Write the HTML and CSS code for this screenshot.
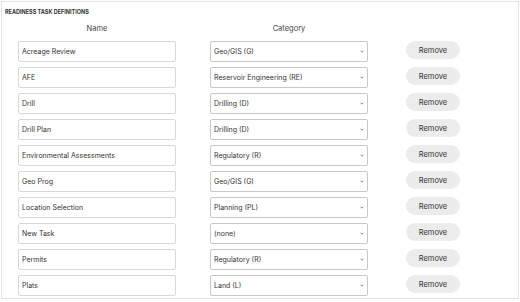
FILE: index.html
```html
<!DOCTYPE html>
<html lang="en">
<head>
  <meta charset="UTF-8" />
  <title>Readiness Task Definitions</title>
  <link rel="stylesheet" href="styles.css">
</head>
<body>
  <div class="panel">
    <h4 class="panel-title">Readiness Task Definitions</h4>
    <div class="task-grid">
      <div class="col-head">Name</div>
      <div class="col-head">Category</div>
      <div></div>

      <input type="text" value="Acreage Review" />
      <div class="select-wrap"><select><option>Geo/GIS (G)</option></select><svg class="chev" viewBox="0 0 4 3"><path d="M0.5 0.7 L2 2.2 L3.5 0.7" /></svg></div>
      <button>Remove</button>

      <input type="text" value="AFE" />
      <div class="select-wrap"><select><option>Reservoir Engineering (RE)</option></select><svg class="chev" viewBox="0 0 4 3"><path d="M0.5 0.7 L2 2.2 L3.5 0.7" /></svg></div>
      <button>Remove</button>

      <input type="text" value="Drill" />
      <div class="select-wrap"><select><option>Drilling (D)</option></select><svg class="chev" viewBox="0 0 4 3"><path d="M0.5 0.7 L2 2.2 L3.5 0.7" /></svg></div>
      <button>Remove</button>

      <input type="text" value="Drill Plan" />
      <div class="select-wrap"><select><option>Drilling (D)</option></select><svg class="chev" viewBox="0 0 4 3"><path d="M0.5 0.7 L2 2.2 L3.5 0.7" /></svg></div>
      <button>Remove</button>

      <input type="text" value="Environmental Assessments" />
      <div class="select-wrap"><select><option>Regulatory (R)</option></select><svg class="chev" viewBox="0 0 4 3"><path d="M0.5 0.7 L2 2.2 L3.5 0.7" /></svg></div>
      <button>Remove</button>

      <input type="text" value="Geo Prog" />
      <div class="select-wrap"><select><option>Geo/GIS (G)</option></select><svg class="chev" viewBox="0 0 4 3"><path d="M0.5 0.7 L2 2.2 L3.5 0.7" /></svg></div>
      <button>Remove</button>

      <input type="text" value="Location Selection" />
      <div class="select-wrap"><select><option>Planning (PL)</option></select><svg class="chev" viewBox="0 0 4 3"><path d="M0.5 0.7 L2 2.2 L3.5 0.7" /></svg></div>
      <button>Remove</button>

      <input type="text" value="New Task" />
      <div class="select-wrap"><select><option>(none)</option></select><svg class="chev" viewBox="0 0 4 3"><path d="M0.5 0.7 L2 2.2 L3.5 0.7" /></svg></div>
      <button>Remove</button>

      <input type="text" value="Permits" />
      <div class="select-wrap"><select><option>Regulatory (R)</option></select><svg class="chev" viewBox="0 0 4 3"><path d="M0.5 0.7 L2 2.2 L3.5 0.7" /></svg></div>
      <button>Remove</button>

      <input type="text" value="Plats" />
      <div class="select-wrap"><select><option>Land (L)</option></select><svg class="chev" viewBox="0 0 4 3"><path d="M0.5 0.7 L2 2.2 L3.5 0.7" /></svg></div>
      <button>Remove</button>
    </div>
  </div>
</body>
</html>
```

FILE: styles.css
```css
body {
  margin: 0;
  padding: 1px;
  background-color: #fff;
  font-family: Inter, "Noto Sans", sans-serif;
  color: #333;
}

.panel {
  border: 1px solid #e2e2e2;
  height: 298px;
  box-sizing: border-box;
  padding: 0 0 0 1px;
}

.panel-title {
  margin: 0;
  padding: 7px 0 0 2px;
  height: 11px;
  font-size: 5.5px;
  font-weight: 700;
  text-transform: uppercase;
  color: #333;
}

.task-grid {
  display: grid;
  grid-template-columns: 188px 196px 92px;
  grid-template-rows: 16px;
  grid-auto-rows: 21px;
  row-gap: 5px;
  justify-items: center;
  align-items: center;
}

.col-head {
  font-size: 7.5px;
  color: #444;
}

input[type="text"], select {
  width: 158px;
  height: 21px;
  box-sizing: border-box;
  border: 1px solid #d8d8d8;
  border-radius: 2px;
  padding: 0 3px;
  font-family: Inter, "Noto Sans", sans-serif;
  font-size: 7px;
  color: #333;
  background-color: #fff;
  margin: 0;
}

/* select con flecha propia */
.select-wrap {
  position: relative;
  width: 158px;
  height: 21px;
}

select {
  display: block;
  appearance: none;
  -webkit-appearance: none;
  border-color: #c8c8cc;
}

.chev {
  position: absolute;
  right: 4px;
  top: 9px;
  width: 4px;
  height: 3px;
  pointer-events: none;
}

.chev path {
  fill: none;
  stroke: #555;
  stroke-width: 0.7;
}

button {
  width: 54px;
  height: 18px;
  border: none;
  border-radius: 9px;
  background-color: #ececec;
  font-family: Inter, "Noto Sans", sans-serif;
  font-size: 7.5px;
  color: #333;
  cursor: pointer;
  align-self: start;
}

button:hover {
  background-color: #e0e0e0;
}
```
